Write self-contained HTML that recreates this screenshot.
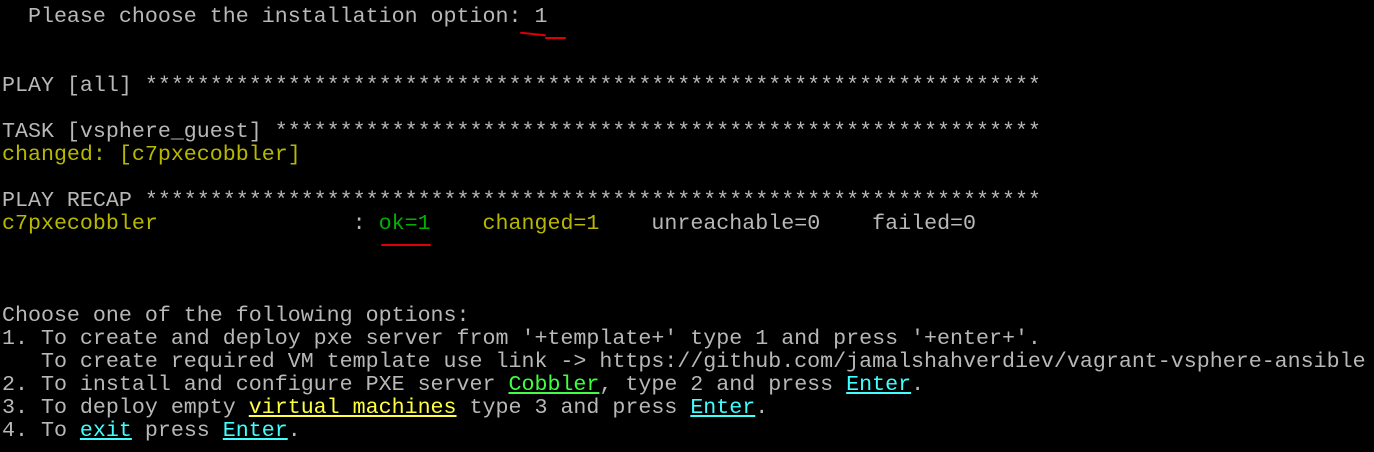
<!DOCTYPE html>
<html><head><meta charset="utf-8"><style>
html,body{margin:0;padding:0;background:#000;width:1374px;height:452px;overflow:hidden}
pre{margin:0;position:absolute;left:2px;top:5px;font-family:"Liberation Mono",monospace;font-size:21.65px;line-height:23px;color:#b8b8b8;white-space:pre}
.y{color:#b8b800}.g{color:#00b000}
.bg{color:#40ff40;text-decoration:underline}
.by{color:#ffff40;text-decoration:underline}
.c{color:#40ffff;text-decoration:underline}
.r{position:absolute;background:#e00000;height:2px;border-radius:1px}
</style></head><body>
<pre>  Please choose the installation option: 1


PLAY [all] *********************************************************************

TASK [vsphere_guest] ***********************************************************
<span class="y">changed: [c7pxecobbler]</span>

PLAY RECAP *********************************************************************
<span class="y">c7pxecobbler</span>               : <span class="g">ok=1</span>    <span class="y">changed=1</span>    unreachable=0    failed=0



Choose one of the following options:
1. To create and deploy pxe server from '+template+' type 1 and press '+enter+'.
   To create required VM template use link -> https://github.com/jamalshahverdiev/vagrant-vsphere-ansible
2. To install and configure PXE server <span class="bg">Cobbler</span>, type 2 and press <span class="c">Enter</span>.
3. To deploy empty <span class="by">virtual machines</span> type 3 and press <span class="c">Enter</span>.
4. To <span class="c">exit</span> press <span class="c">Enter</span>.</pre>
<div class="r" style="left:520px;top:33px;width:26px;transform:rotate(6deg)"></div>
<div class="r" style="left:545px;top:37px;width:21px"></div>
<div class="r" style="left:381px;top:244px;width:50px"></div>
</body></html>
